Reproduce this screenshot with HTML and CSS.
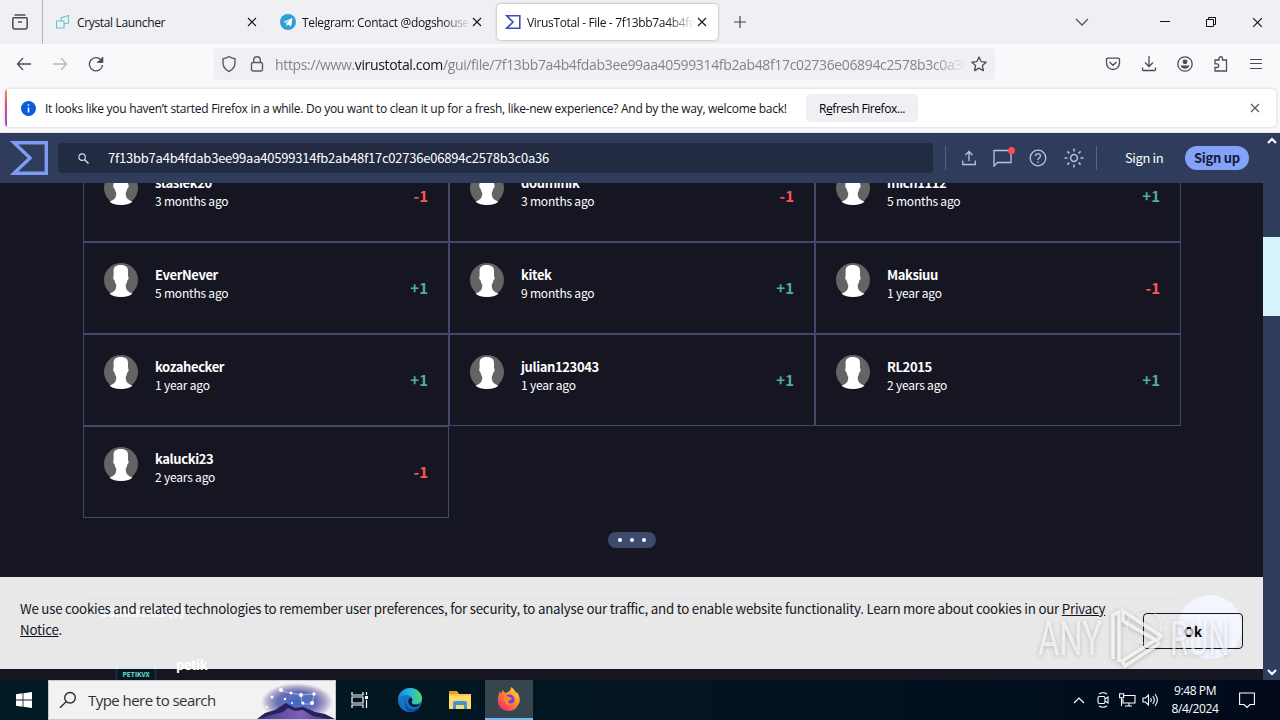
FILE: index.html
```html
<!DOCTYPE html>
<html lang="en">
<head>
    <meta charset="UTF-8">
    <title>VirusTotal - File</title>
    <link rel="stylesheet" href="styles.css">
</head>
<body>
    <svg class="defs">
        <symbol id="close" viewBox="0 0 10 10"><path d="M1 1l8 8M9 1l-8 8" fill="none" stroke="currentColor" stroke-width="1.1"/></symbol>
        <symbol id="avatar" viewBox="0 0 34 34">
            <circle cx="17" cy="17" r="17" fill="#626563"/>
            <path d="M16.500 2C22 2 24.300 4 24 9v4c1.200 1 .5 4-.7 4.600-.4 2-.9 3.300-1.600 4.200 0 4 1 6 3.800 7.500l3 1.400Q24 34 17 34T5.500 30.700l3-1.400c2.800-1.500 3.800-3.500 3.800-7.500-.8-1-1.300-2.200-1.700-4.200C9.400 17 8.800 14 9.600 13V9C9.300 4 11.500 2 16.500 2z" fill="#fff"/>
        </symbol>
    </svg>

    <!-- Tabs -->
    <div class="tab-bar">
        <div class="tab-view">
            <svg width="18" height="18" viewBox="0 0 18 18" fill="none" stroke="#4a4a55" stroke-width="1.500"><path d="M3.500 2h11M1.800 5.700q0-1 1-1h12.400q1 0 1 1V14q0 2-2 2H3.800q-2 0-2-2zM7 9h4"/></svg>
        </div>
        <div class="tab">
            <svg class="favicon" viewBox="0 0 16 16" fill="none" stroke="#62c6c8" stroke-width="1.100"><path d="M6 7V4l7.500-2.500V9L9 10M1.500 7H9v7H1.500z"/></svg>
            <span class="tab-title">Crystal Launcher</span>
            <svg class="tab-close"><use href="#close"/></svg>
        </div>
        <div class="tab">
            <svg class="favicon" viewBox="0 0 16 16"><circle cx="8" cy="8" r="8" fill="#2ea0d6"/><path d="M3 8l9.500-4-1.500 8.500-3-2-1.500 1.500-.3-3 4-3.500-5 3z" fill="#fff"/></svg>
            <span class="tab-title faded">Telegram: Contact @dogshouse_bot</span>
            <svg class="tab-close"><use href="#close"/></svg>
        </div>
        <div class="tab active">
            <svg class="favicon" viewBox="0 0 16 16" fill="none" stroke="#3a50b8" stroke-width="1.600"><path d="M1.800 1.800h13v12.400h-13L8 8z"/></svg>
            <span class="tab-title faded">VirusTotal - File - 7f13bb7a4b4fdab3</span>
            <svg class="tab-close"><use href="#close"/></svg>
        </div>
        <svg class="new-tab" width="12" height="12" viewBox="0 0 12 12" stroke="#44444f" stroke-width="1.200"><path d="M6 0v12M0 6h12"/></svg>
        <div class="window-buttons">
            <svg width="14" height="12" viewBox="0 0 14 12" fill="none" stroke="#55555f" stroke-width="1.300"><path d="M1 3l6 6 6-6"/></svg>
            <svg width="10" height="10" viewBox="0 0 10 10" stroke="#111"><path d="M0 4.500h10"/></svg>
            <svg width="10" height="10" viewBox="0 0 10 10" fill="none" stroke="#111"><path d="M.5 2.500h7v7h-7zM2.500 2.500v-2h7v7h-2"/></svg>
            <svg width="11" height="11"><use href="#close"/></svg>
        </div>
    </div>

    <!-- Address bar -->
    <div class="nav-bar">
        <div class="nav-buttons">
            <svg width="16" height="14" viewBox="0 0 16 14" fill="none" stroke="#4c4c56" stroke-width="1.300"><path d="M15 7H1.500M7 1L1.500 7 7 13"/></svg>
            <svg width="16" height="14" viewBox="0 0 16 14" fill="none" stroke="#b9b9be" stroke-width="1.300"><path d="M1 7h13.500M9 1l5.500 6L9 13"/></svg>
            <svg width="16" height="16" viewBox="0 0 16 16" fill="none" stroke="#4c4c56" stroke-width="1.300"><path d="M13.500 4.500A6.600 6.600 0 1 0 14.600 9M14.500 1v5h-5"/><path d="M14.500 2v4h-4z" fill="#4c4c56"/></svg>
        </div>
        <div class="url-bar">
            <svg width="16" height="18" viewBox="0 0 16 18" fill="none" stroke="#5b5b66" stroke-width="1.400"><path d="M8 1.500c2 1.500 4 2 6 2.300v3.700c0 4-2 7-6 9-4-2-6-5-6-9V3.800C4 3.500 6 3 8 1.500z"/></svg>
            <svg class="lock" width="14" height="18" viewBox="0 0 14 18" fill="none" stroke="#5b5b66" stroke-width="1.400"><rect x="1.500" y="7.500" width="11" height="8.500" rx="1.500"/><path d="M3.700 7.500V5a3.300 3.300 0 0 1 6.600 0v2.500"/></svg>
            <span class="url">https://www.<b>virustotal.com</b>/gui/file/7f13bb7a4b4fdab3ee99aa40599314fb2ab48f17c02736e06894c2578b3c0a36</span>
            <svg width="16" height="16" viewBox="0 0 16 16" fill="none" stroke="#4c4c56" stroke-width="1.300" stroke-linejoin="round"><path d="M8 1l2.100 4.600 5 .6-3.700 3.400 1 5L8 12.100l-4.400 2.500 1-5L.9 6.200l5-.6z"/></svg>
        </div>
        <div class="nav-icons">
            <svg width="16" height="16" viewBox="0 0 16 16" fill="none" stroke="#4c4c56" stroke-width="1.300"><path d="M1.500 3.500q0-1.300 1.300-1.300h10.400q1.300 0 1.300 1.300V7a6.500 6.500 0 0 1-13 0zM4.500 6L8 9.300 11.500 6"/></svg>
            <svg width="16" height="16" viewBox="0 0 16 16" fill="none" stroke="#4c4c56" stroke-width="1.300"><path d="M8 0v10.500M4 6.500l4 4 4-4M1.500 11.500v2q0 1 1 1h11q1 0 1-1v-2"/></svg>
            <svg width="16" height="16" viewBox="0 0 16 16" fill="none" stroke="#4c4c56" stroke-width="1.300"><circle cx="8" cy="8" r="7.200"/><circle cx="8" cy="5.800" r="2.400" fill="#4c4c56" stroke="none"/><path d="M3.500 9.500h9Q11 12.800 8 12.800T3.500 9.500z" fill="#4c4c56" stroke="none"/></svg>
            <svg width="16" height="16" viewBox="0 0 16 16" fill="none" stroke="#4c4c56" stroke-width="1.300"><path d="M6 4V2.500a1.700 1.700 0 0 1 3.500 0V4h4v11H2v-3.500h2a1.800 1.800 0 0 0 0-3.600H2V4z"/></svg>
            <svg width="14" height="16" viewBox="0 0 14 16" stroke="#4c4c56" stroke-width="1.200"><path d="M1 3.500h12M1 7.500h12M1 12.500h12"/></svg>
        </div>
    </div>

    <!-- Firefox notification -->
    <div class="notification-wrap">
        <div class="notification">
            <svg width="15" height="15" viewBox="0 0 15 15"><circle cx="7.500" cy="7.500" r="7.500" fill="#0a5cdb"/><path d="M7.500 3.200v1.600M7.500 6.400v5" stroke="#fff" stroke-width="1.500"/></svg>
            <span class="notification-text">It looks like you haven’t started Firefox in a while. Do you want to clean it up for a fresh, like-new experience? And by the way, welcome back!</span>
            <button class="refresh-btn">R<u>e</u>fresh Firefox...</button>
            <svg class="notification-close"><use href="#close"/></svg>
        </div>
    </div>

    <!-- VirusTotal page -->
    <div class="page">
        <div class="page-main">
            <div class="vt-header">
                <svg class="vt-logo" width="38" height="34" viewBox="0 0 38 34" fill="none" stroke="#7f9cf5" stroke-width="3.400"><path d="M4 1.700h32.300v30.600H4L20 17z"/></svg>
                <div class="vt-search">
                    <svg width="11" height="11" viewBox="0 0 12 12" fill="none" stroke="#d5daea" stroke-width="1.200"><circle cx="4.500" cy="4.500" r="3.500"/><path d="M7 7l4.500 4.500" stroke-width="1.600"/></svg>
                    <span>7f13bb7a4b4fdab3ee99aa40599314fb2ab48f17c02736e06894c2578b3c0a36</span>
                </div>
                <div class="vt-actions">
                    <svg width="14" height="16" viewBox="0 0 14 16" fill="none" stroke="#b6c3e4" stroke-width="1.300"><path d="M7 11V2M3.500 5L7 1.500 10.500 5M.7 10.500v4h12.600v-4"/></svg>
                    <div class="vt-comment-icon">
                        <svg width="19" height="18" viewBox="0 0 19 18" fill="none" stroke="#b6c3e4" stroke-width="1.300"><path d="M1 1.500h17v12H4.500L1 17z"/></svg>
                        <i class="red-dot"></i>
                    </div>
                    <svg width="18" height="18" viewBox="0 0 18 18" fill="none" stroke="#b6c3e4" stroke-width="1.300"><circle cx="9" cy="9" r="7.800"/><path d="M6.500 7c0-3.300 5-3.300 5 0 0 1.800-2.500 1.900-2.500 4M9 12.200v1.500"/></svg>
                    <svg width="20" height="20" viewBox="0 0 20 20" fill="none" stroke="#b6c3e4" stroke-width="1.500"><circle cx="10" cy="10" r="3.400"/><path d="M10 .5v3M10 16.500v3M.5 10h3M16.500 10h3M3.400 3.400l2 2M14.600 14.600l2 2M3.400 16.600l2-2M14.600 5.400l2-2"/></svg>
                </div>
                <span class="sign-in">Sign in</span>
                <span class="sign-up">Sign up</span>
            </div>
            <div class="vt-content">
                <div class="votes">
                    <div class="vote"><svg class="avatar"><use href="#avatar"/></svg><div class="voter"><b>stasiek20</b><span>3 months ago</span></div><span class="score bad">-1</span></div>
                    <div class="vote"><svg class="avatar"><use href="#avatar"/></svg><div class="voter"><b>douminik</b><span>3 months ago</span></div><span class="score bad">-1</span></div>
                    <div class="vote"><svg class="avatar"><use href="#avatar"/></svg><div class="voter"><b>mich1112</b><span>5 months ago</span></div><span class="score good">+1</span></div>
                    <div class="vote"><svg class="avatar"><use href="#avatar"/></svg><div class="voter"><b>EverNever</b><span>5 months ago</span></div><span class="score good">+1</span></div>
                    <div class="vote"><svg class="avatar"><use href="#avatar"/></svg><div class="voter"><b>kitek</b><span>9 months ago</span></div><span class="score good">+1</span></div>
                    <div class="vote"><svg class="avatar"><use href="#avatar"/></svg><div class="voter"><b>Maksiuu</b><span>1 year ago</span></div><span class="score bad">-1</span></div>
                    <div class="vote"><svg class="avatar"><use href="#avatar"/></svg><div class="voter"><b>kozahecker</b><span>1 year ago</span></div><span class="score good">+1</span></div>
                    <div class="vote"><svg class="avatar"><use href="#avatar"/></svg><div class="voter"><b>julian123043</b><span>1 year ago</span></div><span class="score good">+1</span></div>
                    <div class="vote"><svg class="avatar"><use href="#avatar"/></svg><div class="voter"><b>RL2015</b><span>2 years ago</span></div><span class="score good">+1</span></div>
                    <div class="vote"><svg class="avatar"><use href="#avatar"/></svg><div class="voter"><b>kalucki23</b><span>2 years ago</span></div><span class="score bad">-1</span></div>
                </div>
                <div class="more"><i></i><i></i><i></i></div>
                <div class="comments">
                    <h3>Comments (7)</h3>
                    <div class="comment">
                        <div class="comment-avatar">PETIKVX</div>
                        <div class="comment-author"><b>petik</b><span>28 days ago</span></div>
                    </div>
                </div>
                <div class="chat-bubble"></div>
                <div class="cookies">
                    <p>We use cookies and related technologies to remember user preferences, for security, to analyse our traffic, and to enable website functionality. Learn more about cookies in our <u>Privacy</u><br><u>Notice</u>.</p>
                    <button>Ok</button>
                </div>
            </div>
        </div>
        <div class="scrollbar">
            <svg width="10" height="7" viewBox="0 0 10 7" fill="none" stroke="#fff" stroke-width="2.200"><path d="M1 6l4-4 4 4"/></svg>
            <div class="thumb"></div>
            <svg width="10" height="7" viewBox="0 0 10 7" fill="none" stroke="#fff" stroke-width="2.200"><path d="M1 1l4 4 4-4"/></svg>
        </div>
        <div class="watermark">
            <span>ANY</span>
            <svg width="58" height="64" viewBox="0 0 58 64" fill="none" stroke="#fff" stroke-opacity=".75" stroke-width="3.500"><path d="M5 52V8l6-3v50M15 4l38 25-4 5-34-20zM52 36L17 59l-3-5 32-20"/><circle cx="36" cy="19" r="17" stroke-width="1" stroke-opacity=".5"/></svg>
            <span class="run">RUN</span>
        </div>
    </div>

    <!-- Windows taskbar -->
    <div class="taskbar">
        <div class="start">
            <svg width="16" height="16" viewBox="0 0 16 16" fill="#fff"><path d="M0 2.300l6.600-1v6.300H0zM7.400 1.200L16 0v7.600H7.400zM0 8.400h6.600v6.300l-6.600-1zM7.400 8.400H16V16l-8.600-1.200z"/></svg>
        </div>
        <div class="task-search">
            <svg width="18" height="18" viewBox="0 0 18 18" fill="none" stroke="#222" stroke-width="1.300"><circle cx="11" cy="6.800" r="5.300"/><path d="M7.200 10.600L1 16.800"/></svg>
            <span>Type here to search</span>
            <svg class="night" width="80" height="37" viewBox="0 0 80 37">
                <defs>
                    <radialGradient id="sky"><stop offset="0" stop-color="#3d67c8"/><stop offset=".55" stop-color="#6870b4"/><stop offset=".8" stop-color="#b0a9ca"/><stop offset="1" stop-color="#f2f2f2"/></radialGradient>
                    <linearGradient id="hill" x2="1"><stop offset="0" stop-color="#46368b"/><stop offset=".6" stop-color="#8260b8"/><stop offset="1" stop-color="#3d2f7c"/></linearGradient>
                </defs>
                <ellipse cx="42" cy="20" rx="36" ry="19" fill="url(#sky)"/>
                <path d="M2 37l8-6 10-3 11-7 9 5 8-1 12 5 10 2 10 5z" fill="#26215b"/>
                <path d="M4 37l12-4 12-3 5-4 7 3 8-1 10 6 16 3z" fill="url(#hill)"/>
                <path d="M26 9l10 2 10 2 13-1-2 10H47l-1-9" fill="none" stroke="#a8c4ff" stroke-width=".8"/>
                <g fill="#fff"><circle cx="26" cy="8" r="2"/><circle cx="36" cy="11" r="1.500"/><circle cx="46" cy="13" r="2"/><circle cx="59" cy="12" r="1.700"/><circle cx="57" cy="21" r="2"/><circle cx="48" cy="21" r="1.500"/><circle cx="17" cy="15" r="1.500"/><circle cx="30" cy="17" r="1.200"/><circle cx="12" cy="25" r="1"/><circle cx="37" cy="21" r="1"/></g>
            </svg>
        </div>
        <div class="task-apps">
            <div class="app"><svg width="18" height="18" viewBox="0 0 18 18" fill="none" stroke="#fff" stroke-width="1.200"><path d="M1 1v3h11V1M1 17v-3h11v3M1 6h11v6H1zM15.500 1v3M15.500 9v8"/><path d="M14 5h3v3h-3z" fill="#fff" stroke="none"/></svg></div>
            <div class="app"><svg width="24" height="24" viewBox="0 0 24 24">
                <defs><linearGradient id="edge" x2="1"><stop offset="0" stop-color="#1684d8"/><stop offset=".5" stop-color="#27b6dc"/><stop offset="1" stop-color="#54d667"/></linearGradient></defs>
                <circle cx="12" cy="12" r="12" fill="#1672c9"/>
                <path d="M0 11C1 4 6 0 12 0c7 0 12 5 12 10 0 4-3 6-7 6-3 0-4-1-3-3 1-3-1-6-5-6-4 0-7 1-9 4z" fill="url(#edge)"/>
                <path d="M9 11c-3 4 0 9 5 10 4 .5 6-1 8-3-2 4-6 6-10 6C7 23 5 15 9 11z" fill="#134e9c"/>
                <path d="M14 13c1-2 0-3-2-3-3 2-2 8 4 9 3 0 5-1 7-3-2 1-11 2-9-3z" fill="#021a24"/>
            </svg></div>
            <div class="app"><svg width="22" height="19" viewBox="0 0 22 19"><path d="M0 1h8l2 2h12v15H0z" fill="#f9c94b"/><path d="M0 0h8l2 3H0z" fill="#e79b25"/><path d="M0 5h22v13H0z" fill="#ffd969"/><path d="M4 18v-6q0-2 2-2h10q2 0 2 2v6h-3v-4H7v4z" fill="#3f96d4"/></svg></div>
            <div class="app current"><svg width="24" height="24" viewBox="0 0 24 24">
                <defs><linearGradient id="fox" x1="1" y1="0" x2=".2" y2="1"><stop offset="0" stop-color="#fff04a"/><stop offset=".45" stop-color="#ff9128"/><stop offset="1" stop-color="#f5266e"/></linearGradient></defs>
                <path d="M3 4l1 3 2-4 2 3 3-1c2-1 3-3 3-5 3 2 4 4 5 6l1-1c3 5 4 9 1 13-2 4-5 6-9 6C5 24 0 19 1 12c0-3 1-5 2-8z" fill="url(#fox)"/>
                <circle cx="12.500" cy="12.500" r="5" fill="#7542d4"/><path d="M7 10c3-2 5 0 8 1-1 3-4 2-4 4 1 2 4 2 6 0-2 5-11 4-10-5z" fill="#ff8a2c"/>
            </svg></div>
        </div>
        <div class="tray">
            <svg width="12" height="8" viewBox="0 0 12 8" fill="none" stroke="#fff" stroke-width="1.200"><path d="M1 7l5-5 5 5"/></svg>
            <svg width="12" height="16" viewBox="0 0 12 16" fill="none" stroke="#fff" stroke-width="1.100"><rect x="1" y="4.500" width="7" height="7" rx="1.500"/><path d="M8 7l3-2v6L8 9M2 2q4-2.500 8 0M2 14q4 2.500 8 0"/></svg>
            <svg width="17" height="14" viewBox="0 0 17 14" fill="none" stroke="#fff" stroke-width="1.100"><path d="M5 2.500h11v7.500H4V6M10 10v3M6 13h7M.6.800h4v4h-4zM2.500 5v8"/></svg>
            <svg width="17" height="14" viewBox="0 0 17 14" fill="none" stroke="#fff" stroke-width="1.100"><path d="M1 5h2.500l3-3v10l-3-3H1zM8.500 5q1.500 2 0 4M10.800 3q3 4 0 8M13 1q4.800 6 0 12"/></svg>
            <div class="clock"><span>9:48 PM</span><span>8/4/2024</span></div>
            <svg width="16" height="17" viewBox="0 0 16 17" fill="none" stroke="#fff" stroke-width="1.100"><path d="M.6 1h14.800v11.500H11L8 15.500l-3-3H.6z"/></svg>
        </div>
    </div>
</body>
</html>
```
FILE: styles.css
```css
* {
    box-sizing: border-box;
}

body {
    margin: 0;
    width: 1280px;
    height: 720px;
    overflow: hidden;
    display: flex;
    flex-direction: column;
    font-family: "Open Sans", "Noto Sans", sans-serif;
    font-size: 12px;
    color: #15141a;
}

svg {
    flex: none;
    display: block;
}

button {
    font: inherit;
    padding: 0;
    border: none;
}

.defs {
    display: none;
}

/* tabs */
.tab-bar {
    height: 44px;
    background: #f0f0f4;
    display: flex;
    align-items: center;
}

.tab-view {
    width: 43px;
    height: 44px;
    padding: 13px 0 0 11px;
    border-right: 1px solid #b5b5bd;
}

.tab {
    width: 221px;
    height: 38px;
    margin-left: 4px;
    padding: 0 11px 0 8px;
    display: flex;
    align-items: center;
    border-radius: 4px;
}

.favicon {
    width: 16px;
    height: 16px;
    margin-right: 6px;
}

.tab-title {
    flex: 1;
    min-width: 0;
    overflow: hidden;
    white-space: nowrap;
    letter-spacing: -0.35px;
}

.faded {
    -webkit-mask-image: linear-gradient(to left, transparent, #000 28px);
    mask-image: linear-gradient(to left, transparent, #000 28px);
}

.tab-close {
    width: 10px;
    height: 10px;
    margin-left: 2px;
}

.tab.active {
    height: 36px;
    background: #fff;
    box-shadow: 0 0 3px #a0a0a8;
}

.new-tab {
    margin-left: 16px;
}

.window-buttons {
    margin-left: auto;
    padding-right: 17px;
    display: flex;
    align-items: center;
    gap: 36px;
}

.window-buttons svg:first-child {
    margin-right: 35px;
}

/* address bar */
.nav-bar {
    height: 40px;
    background: #f9f9fb;
    display: flex;
    align-items: center;
}

.nav-buttons {
    width: 214px;
    padding-left: 16px;
    display: flex;
    align-items: center;
    gap: 20px;
}

.url-bar {
    width: 781px;
    height: 32px;
    padding: 0 8px 0 7px;
    background: #f0f0f4;
    border-radius: 4px;
    display: flex;
    align-items: center;
}

.lock {
    margin: 0 11px 0 13px;
}

.url {
    width: 690px;
    margin-right: auto;
    overflow: hidden;
    white-space: nowrap;
    font-size: 14px;
    letter-spacing: -0.35px;
    color: #83838a;
    -webkit-mask-image: linear-gradient(to left, transparent, #000 32px);
    mask-image: linear-gradient(to left, transparent, #000 32px);
}

.url b {
    font-weight: normal;
    color: #15141a;
}

.nav-icons {
    margin-left: auto;
    padding-right: 17px;
    display: flex;
    align-items: center;
    gap: 20px;
}

/* notification */
.notification-wrap {
    height: 49px;
    padding: 5px 4px 6px 5px;
    background: #f9f9fb;
    border-bottom: 1px solid #e2e4ee;
}

.notification {
    height: 38px;
    padding: 0 16px 0 14px;
    background: linear-gradient(#ff9640, #d6409a 45%, #9059c8) left / 2px 100% no-repeat #fff;
    border-radius: 4px;
    box-shadow: 0 0 3px #c8c8cc;
    display: flex;
    align-items: center;
}

.notification svg:first-child {
    margin: 0 9px 0 2px;
}

.notification-text {
    width: 761px;
    white-space: nowrap;
    letter-spacing: -0.285px;
}

.refresh-btn {
    width: 112px;
    height: 28px;
    background: #f0f0f4;
    border-radius: 4px;
    letter-spacing: -0.45px;
}

.notification-close {
    width: 10px;
    height: 10px;
    margin-left: auto;
    color: #55555f;
}

/* virustotal */
.page {
    height: 547px;
    display: flex;
    position: relative;
    font-family: "Noto Sans CJK SC", sans-serif;
}

.page-main {
    width: 1263px;
    display: flex;
    flex-direction: column;
}

.vt-header {
    height: 50px;
    padding: 0 14px 0 10px;
    background: #2f3c5c;
    display: flex;
    align-items: center;
    font-size: 14px;
    color: #fff;
}

.vt-search {
    width: 875px;
    height: 30px;
    margin-left: 10px;
    padding-left: 20px;
    background: #232b43;
    border-radius: 4px;
    display: flex;
    align-items: center;
    gap: 19px;
    font-size: 13px;
    line-height: 18px;
    letter-spacing: -0.22px;
}

.vt-actions {
    width: 152px;
    height: 24px;
    margin-left: 12px;
    padding-left: 16px;
    border: solid #52658f;
    border-width: 0 1px;
    display: flex;
    align-items: center;
    gap: 17px;
}

.vt-comment-icon {
    position: relative;
}

.red-dot {
    position: absolute;
    top: -2px;
    right: -3px;
    width: 7px;
    height: 7px;
    border-radius: 50%;
    background: #ff4d4f;
}

.sign-in {
    width: 60px;
    margin-left: 28px;
    font-size: 13px;
    line-height: 20px;
    letter-spacing: -0.4px;
}

.sign-up {
    width: 64px;
    height: 24px;
    line-height: 24px;
    border-radius: 12px;
    background: #85a2fa;
    color: #151a3a;
    font-size: 13px;
    font-weight: bold;
    letter-spacing: -0.25px;
    text-align: center;
}

.vt-content {
    height: 497px;
    overflow: hidden;
    position: relative;
    background: #161622;
    color: #fff;
}

.votes {
    margin: -33px 82px 0 83px;
    display: grid;
    grid-template-columns: repeat(3, 366px);
    grid-auto-rows: 92px;
}

.vote {
    padding: 20px;
    border: 1px solid #41486a;
    display: flex;
}

.avatar {
    width: 34px;
    height: 34px;
}

.voter {
    margin-left: 17px;
    display: flex;
    flex-direction: column;
    font-size: 12px;
    line-height: 20px;
    letter-spacing: -0.2px;
}

.voter b {
    margin-top: 3px;
    font-size: 13px;
    line-height: 17px;
    letter-spacing: -0.38px;
}

.score {
    margin: 14px 0 0 auto;
    font-size: 15px;
    line-height: 22px;
    font-weight: bold;
}

.good {
    color: #4fae9c;
}

.bad {
    color: #ff5757;
}

.more {
    width: 48px;
    height: 16px;
    margin: 14px 0 0 608px;
    border-radius: 8px;
    background: #3d4a6b;
    display: flex;
    align-items: center;
    justify-content: center;
    gap: 8px;
}

.more i {
    width: 4px;
    height: 4px;
    border-radius: 50%;
    background: #fff;
}

.comments {
    margin: 44px 82px 0 83px;
    border-top: 1px solid #41486a;
}

.comments h3 {
    height: 36px;
    margin: 0;
    padding-left: 16px;
    border-bottom: 1px solid #41486a;
    font-size: 13px;
    line-height: 38px;
    letter-spacing: -0.38px;
}

.comment {
    display: flex;
    padding: 26px 0 0 34px;
}

.comment-avatar {
    width: 38px;
    height: 38px;
    border-radius: 50%;
    background: #07171d;
    box-shadow: 0 0 3px #087d82;
    color: #6ce0da;
    font-size: 6.500px;
    font-weight: bold;
    line-height: 38px;
    text-align: center;
}

.comment-author {
    margin-left: 21px;
    display: flex;
    flex-direction: column;
    font-size: 12px;
    line-height: 20px;
}

.comment-author b {
    font-size: 13px;
    line-height: 20px;
    letter-spacing: -0.38px;
}

.chat-bubble {
    position: absolute;
    right: 21px;
    top: 412px;
    width: 64px;
    height: 64px;
    border-radius: 50%;
    background: #85a2fa;
}

.cookies {
    position: absolute;
    left: 0;
    right: 0;
    top: 394px;
    height: 92px;
    padding: 0 20px;
    background: rgba(255, 255, 255, 0.9);
    color: #161622;
    display: flex;
    justify-content: space-between;
    align-items: flex-start;
    font-size: 13.300px;
    line-height: 21px;
    letter-spacing: -0.23px;
}

.cookies p {
    margin: 21px 0 0;
    white-space: nowrap;
}

.cookies button {
    flex: none;
    width: 100px;
    height: 36px;
    margin-top: 36px;
    background: none;
    border: 1px solid #161622;
    border-radius: 4px;
    font-weight: bold;
}

.scrollbar {
    width: 17px;
    padding: 4px 0;
    background: #2f3c5c;
    display: flex;
    flex-direction: column;
    align-items: center;
    justify-content: space-between;
}

.thumb {
    width: 17px;
    height: 79px;
    margin: 0 0 260px;
    background: #d6f4fe;
}

.watermark {
    position: absolute;
    left: 1038px;
    top: 474px;
    display: flex;
    align-items: center;
    gap: 8px;
    font-family: Roboto, sans-serif;
    font-size: 48px;
    line-height: 64px;
    color: rgba(255, 255, 255, 0.65);
    filter: drop-shadow(0 1px 2px rgba(0, 0, 0, 0.3));
}

.watermark span {
    width: 62px;
    transform: scaleX(0.68);
    transform-origin: left;
}

.watermark .run {
    margin-left: -4px;
    transform: scaleX(0.63);
}

/* taskbar */
.taskbar {
    height: 40px;
    background: linear-gradient(90deg, #021a24, #021420 60%, #020a1c);
    display: flex;
    color: #fff;
}

.start {
    width: 48px;
    padding: 12px 16px;
}

.task-search {
    width: 288px;
    height: 40px;
    background: #f2f2f2;
    border: 1px solid #c5c9cb;
    display: flex;
    align-items: center;
    padding-left: 10px;
    color: #333;
    font-size: 15px;
    letter-spacing: -0.55px;
}

.task-search span {
    margin-left: 11px;
}

.night {
    margin-left: auto;
    align-self: flex-end;
}

.task-apps {
    display: flex;
}

.app {
    width: 48px;
    height: 40px;
    margin-right: 2px;
    display: flex;
    align-items: center;
    justify-content: center;
}

.current {
    margin-left: -1px;
    background: #36464f;
    border-bottom: 2px solid #76b9ed;
}

.tray {
    margin-left: auto;
    padding-right: 25px;
    display: flex;
    align-items: center;
    gap: 12px;
}

.tray svg:nth-child(3) {
    margin: 0 -6px 0 -2px;
}

.clock {
    width: 62px;
    margin: 0 1px 0 -7px;
    display: flex;
    flex-direction: column;
    align-items: center;
    line-height: 18px;
    font-size: 12px;
    letter-spacing: -0.4px;
}
```
